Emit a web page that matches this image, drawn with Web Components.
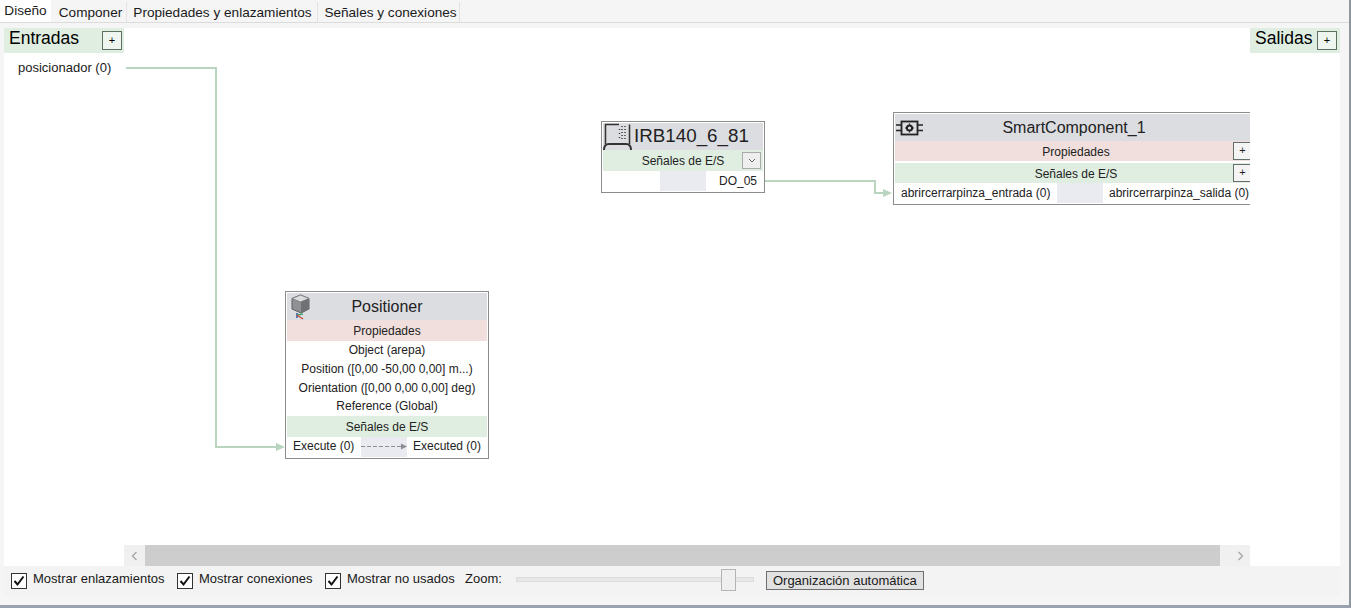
<!DOCTYPE html>
<html lang="es">
<head>
<meta charset="utf-8">
<title>Diseño</title>
<style>
  html, body { margin: 0; height: 608px; overflow: hidden; background: #fff; }
  body { font: 13px "Liberation Sans", Arial, sans-serif; color: #1a1a1a; }
</style>
</head>
<body>

<design-window>
  <tab-strip slot="tabs">
    <tab-item active>Diseño</tab-item>
    <tab-item style="width:72px">Componer</tab-item>
    <tab-item style="width:190px">Propiedades y enlazamientos</tab-item>
    <tab-item style="width:141px;padding-left:3px">Señales y conexiones</tab-item>
  </tab-strip>

  <io-column slot="inputs" label="Entradas" wide>
    <div style="padding:7px 0 0 14px">posicionador (0)</div>
  </io-column>

  <graph-view slot="graph">
    <flow-node heading="Positioner" icon="positioner" style="left:161px;top:263px;width:204px">
      <node-band tone="red">Propiedades</node-band>
      <node-prop>Object (arepa)</node-prop>
      <node-prop>Position ([0,00 -50,00 0,00] m...)</node-prop>
      <node-prop>Orientation ([0,00 0,00 0,00] deg)</node-prop>
      <node-prop>Reference (Global)</node-prop>
      <node-band tone="green">Señales de E/S</node-band>
      <signal-row left="Execute (0)" right="Executed (0)" left-width="74" link style="line-height:18px"></signal-row>
    </flow-node>

    <flow-node heading="IRB140_6_81" icon="controller" heading-align="left" style="left:477px;top:93px;width:164px">
      <node-band tone="green" toggle="down">Señales de E/S</node-band>
      <signal-row right="DO_05" left-width="57" align-right></signal-row>
    </flow-node>

    <flow-node heading="SmartComponent_1" icon="smart" open-right style="left:769px;top:84px;width:360px">
      <node-band tone="red" toggle="plus" compact spaced>Propiedades</node-band>
      <node-band tone="green" toggle="plus" compact>Señales de E/S</node-band>
      <signal-row left="abrircerrarpinza_entrada (0)" right="abrircerrarpinza_salida (0)" left-width="162"></signal-row>
    </flow-node>
  </graph-view>

  <io-column slot="outputs" label="Salidas"></io-column>

  <h-scroll slot="scroll"></h-scroll>

  <tool-bar slot="toolbar"></tool-bar>
</design-window>

<script>
class DesignWindow extends HTMLElement {
  constructor() {
    super();
    this.attachShadow({ mode: 'open' });
    this.shadowRoot.innerHTML = `
      <style>
        :host { display: flex; flex-direction: column; width: 1351px; height: 608px; box-sizing: border-box;
          background: #f5f5f5; border-bottom: 3px solid #9aa3ad; border-right: 2px solid #8e969e; }
        .body { margin: 5px 0 0 4px; width: 1336px; height: 538px; background: #fff;
          display: grid; grid-template-columns: 120px 1126px 90px; grid-template-rows: 517px 21px; }
        .scroll { grid-column: 2; }
        .foot { margin-left: 4px; width: 1336px; height: 30px; background: #f3f3f3; }
      </style>
      <slot name="tabs"></slot>
      <div class="body">
        <slot name="inputs"></slot>
        <slot name="graph"></slot>
        <slot name="outputs"></slot>
        <div class="scroll"><slot name="scroll"></slot></div>
      </div>
      <div class="foot"><slot name="toolbar"></slot></div>
    `;
  }
}

class TabStrip extends HTMLElement {
  constructor() {
    super();
    this.attachShadow({ mode: 'open' });
    this.shadowRoot.innerHTML = `
      <style>
        :host { display: flex; align-items: flex-end; height: 23px; box-sizing: border-box;
          border-bottom: 1px solid #dcdcdc; gap: 1px; font-size: 13.600px; }
      </style>
      <slot></slot>
    `;
  }
}

class TabItem extends HTMLElement {
  constructor() {
    super();
    this.attachShadow({ mode: 'open' });
    this.shadowRoot.innerHTML = `
      <style>
        :host { display: block; box-sizing: border-box; height: 20px; line-height: 22px; text-align: center;
          background: #f5f5f5; border: 1px solid #e2e2e2; border-width: 0 1px 0 0; white-space: nowrap; }
        :host([active]) { width: 51px; margin-right: 3px; height: 22px; line-height: 21px; background: #fff; border: 0; }
      </style>
      <slot></slot>
    `;
  }
}

class IoColumn extends HTMLElement {
  constructor() {
    super();
    this.attachShadow({ mode: 'open' });
    const label = this.getAttribute('label');
    this.shadowRoot.innerHTML = `
      <style>
        :host { display: block; font-size: 17.500px; }
        .head { display: flex; align-items: center; justify-content: space-between; box-sizing: border-box;
          height: 25px; padding: 0 3px 0 5px; background: #dfeee0; color: #000; }
        :host([wide]) .head { padding: 0 2px 0 5px; }
        .name { margin-bottom: 4px; }
        .add { width: 20px; height: 19px; box-sizing: border-box; border: 1px solid #5f6f62; background: #eef6ef;
          font-size: 11px; line-height: 16px; text-align: center; }
        .list { font-size: 13px; color: #1a1a1a; }
      </style>
      <div class="head"><span class="name">${label}</span><span class="add">+</span></div>
      <div class="list"><slot></slot></div>
    `;
  }
}

class GraphView extends HTMLElement {
  constructor() {
    super();
    this.attachShadow({ mode: 'open' });
    this.shadowRoot.innerHTML = `
      <style>
        :host { display: block; position: relative; overflow: hidden; height: 517px; }
        svg { position: absolute; left: 0; top: 0; }
      </style>
      <svg width="1126" height="517" fill="none" stroke="#b9d4bf" stroke-width="2">
        <path d="M2 40H92V419H152"/>
        <path d="M152 415l9 4-9 4z" fill="#b9d4bf" stroke="none"/>
        <path d="M641 153H751V165H759"/>
        <path d="M759 161l9 4-9 4z" fill="#b9d4bf" stroke="none"/>
      </svg>
      <slot></slot>
    `;
  }
}

const NODE_ICONS = {
  positioner: `<svg width="24" height="26" viewBox="-5 0 24 26" fill="none">
      <path d="M0 4.500L8.500 1 17 4.500V15l-8 4-9-4z" fill="#8f9194" stroke="#5c5e61"/>
      <path d="M0 4.500L8.500 1 17 4.500 8.500 8z" fill="#dadcde" stroke="#77797c" stroke-width=".8"/>
      <path d="M9 8v11l8-4V4.500z" fill="#6f7174"/>
      <path d="M5 19v5" stroke="#2a55a8" stroke-width="1.500"/>
      <path d="M5 21l6-1" stroke="#3fa56a" stroke-width="1.500"/>
      <path d="M5 21l6 4" stroke="#c8503c" stroke-width="1.500"/>
    </svg>`,
  controller: `<svg width="30" height="28" viewBox="0 0 30 28" fill="none" stroke="#333">
      <path d="M2.500 21V1.500H16M26.500 1.500V21" stroke-width="1.500"/>
      <path d="M19 3v1M19 6v1M19 9v1M19 12v1M19 15v1M22 3v1M22 6v1M22 9v1M22 12v1M22 15v1M16.500 6v1M16.500 10v1M16.500 14v1" stroke-width="1.400"/>
      <path d="M1 27c0-4 2-6 5-6h17c3 0 5 2 5 6" stroke-width="2"/>
    </svg>`,
  smart: `<svg width="29" height="16" viewBox="0 0 29 16" fill="none" stroke="#222">
      <rect x="6.500" y="1.500" width="16" height="13" stroke-width="1.800"/>
      <path d="M1 5h5M1 10.500h5M23 5h5M23 10.500h5" stroke-width="1.500"/>
      <circle cx="14.500" cy="8" r="2.600" stroke-width="2"/>
      <path d="M14.500 3.500v1.500M14.500 11v1.500M10 8h1.500M17.500 8H19" stroke-width="1.200"/>
    </svg>`
};

class FlowNode extends HTMLElement {
  constructor() {
    super();
    this.attachShadow({ mode: 'open' });
    const icon = NODE_ICONS[this.getAttribute('icon')] || '';
    this.shadowRoot.innerHTML = `
      <style>
        :host { display: block; position: absolute; box-sizing: border-box; padding: 1px;
          background: #fff; border: 1px solid #8c8c8c; }
        :host([open-right]) { border-right: 0; padding-right: 0; }
        .title { position: relative; height: 27px; line-height: 27px; background: #dcdde1; text-align: center;
          font-size: 16px; color: #222; }
        :host([heading-align="left"]) .title { text-align: left; padding-left: 31px; font-size: 18.800px; line-height: 26px; }
        .icon { position: absolute; left: 0; top: 0; height: 27px; display: flex; align-items: center; }
      </style>
      <div class="title"><span class="icon">${icon}</span>${this.getAttribute('heading')}</div>
      <slot></slot>
    `;
  }
}

class NodeBand extends HTMLElement {
  constructor() {
    super();
    this.attachShadow({ mode: 'open' });
    const toggle = this.getAttribute('toggle');
    let btn = '';
    if (toggle === 'plus') btn = '<span class="btn plus">+</span>';
    if (toggle === 'down') btn = `<span class="btn down"><svg width="8" height="5" viewBox="0 0 8 5" fill="none" stroke="#666"><path d="M1 1l3 3 3-3"/></svg></span>`;
    this.shadowRoot.innerHTML = `
      <style>
        :host { display: block; position: relative; height: 21px; line-height: 23px; text-align: center;
          font-size: 12px; color: #222; }
        :host([compact]) { height: 20px; box-sizing: border-box; padding-left: 4px; }
        :host([tone="red"]) { background: #f0dfdd; }
        :host([tone="green"]) { background: #dfeee0; }
        :host([spaced]) { margin-bottom: 2px; }
        .btn { position: absolute; right: 1px; top: 1px; box-sizing: border-box; width: 19px; height: 18px;
          border: 1px solid #66706a; background: #f4f4f4; font-size: 11px; line-height: 14px; }
        .down { right: 2px; top: 2px; height: 17px; border-color: #aaa; display: flex; align-items: center; justify-content: center; background: #eee; }
      </style>
      <slot></slot>${btn}
    `;
  }
}

class NodeProp extends HTMLElement {
  constructor() {
    super();
    this.attachShadow({ mode: 'open' });
    this.shadowRoot.innerHTML = `
      <style>
        :host { display: block; height: 18.750px; line-height: 19px; text-align: center; font-size: 12px; color: #222; white-space: nowrap; }
      </style>
      <slot></slot>
    `;
  }
}

class SignalRow extends HTMLElement {
  constructor() {
    super();
    this.attachShadow({ mode: 'open' });
    const left = this.getAttribute('left') || '';
    const right = this.getAttribute('right') || '';
    const leftWidth = this.getAttribute('left-width');
    const link = this.hasAttribute('link')
      ? `<svg width="46" height="20" viewBox="0 0 46 20" fill="none"><path d="M0 9.500H40" stroke="#8b8e96" stroke-dasharray="4 2"/><path d="M40 6.500l6 3-6 3z" fill="#8b8e96"/></svg>`
      : '';
    this.shadowRoot.innerHTML = `
      <style>
        :host { display: flex; height: 20px; line-height: 20px; font-size: 12px; color: #222; white-space: nowrap; }
        .l { box-sizing: border-box; width: ${leftWidth}px; padding-left: 6px; overflow: hidden; }
        .m { width: 46px; background: #e9ebf1; flex: none; }
        .r { flex: 1; padding-left: 6px; }
        :host([align-right]) .r { padding: 0 6px 0 0; text-align: right; }
      </style>
      <div class="l">${left}</div><div class="m">${link}</div><div class="r">${right}</div>
    `;
  }
}

class HScroll extends HTMLElement {
  constructor() {
    super();
    this.attachShadow({ mode: 'open' });
    this.shadowRoot.innerHTML = `
      <style>
        :host { display: flex; height: 21px; background: #f0f0f0; }
        .arrow { width: 21px; display: flex; align-items: center; justify-content: center; }
        .arrow.end { width: 30px; padding-right: 6px; box-sizing: border-box; justify-content: flex-end; }
        .thumb { width: 1075px; background: #cdcdcd; }
      </style>
      <div class="arrow"><svg width="7" height="10" viewBox="0 0 7 10" fill="none" stroke="#a5a5a5" stroke-width="1.300"><path d="M5.500 1L1.500 5l4 4"/></svg></div>
      <div class="thumb"></div>
      <div class="arrow end"><svg width="7" height="10" viewBox="0 0 7 10" fill="none" stroke="#a5a5a5" stroke-width="1.300"><path d="M1.500 1l4 4-4 4"/></svg></div>
    `;
  }
}

class ToolCheck extends HTMLElement {
  constructor() {
    super();
    this.attachShadow({ mode: 'open' });
    this.shadowRoot.innerHTML = `
      <style>
        :host { display: flex; align-items: center; gap: 6px; white-space: nowrap; }
        .box { width: 16px; height: 16px; box-sizing: border-box; border: 1px solid #333; background: #fff; margin-top: 1px; }
        svg { display: block; }
        .text { margin-top: -3px; }
      </style>
      <span class="box"><svg width="14" height="14" viewBox="0 0 14 14" fill="none" stroke="#111" stroke-width="2"><path d="M2.500 7l3 3.500 6-8"/></svg></span>
      <span class="text"><slot></slot></span>
    `;
  }
}

class ToolBar extends HTMLElement {
  constructor() {
    super();
    this.attachShadow({ mode: 'open' });
    this.shadowRoot.innerHTML = `
      <style>
        :host { display: flex; align-items: center; height: 28px; padding-left: 7px; box-sizing: border-box; }
        .zoom { margin: -3px 0 0 11px; }
        .slider { position: relative; width: 236px; height: 3px; margin: -1px 0 0 14px; background: #e7e7e7; border: 1px solid #dcdcdc; }
        .thumb { position: absolute; left: 204px; top: -9px; width: 13px; height: 20px; background: #efefef; border: 1px solid #b4b4b4; }
        button { all: unset; box-sizing: border-box; width: 158px; height: 19px; margin-left: 12px; text-align: center; line-height: 18px;
          background: #e1e1e1; border: 1px solid #6f6f6f; font: inherit; color: #1a1a1a; }
      </style>
      <tool-check style="width:166px">Mostrar enlazamientos</tool-check>
      <tool-check style="width:148px">Mostrar conexiones</tool-check>
      <tool-check style="width:129px">Mostrar no usados</tool-check>
      <span class="zoom">Zoom:</span>
      <div class="slider"><div class="thumb"></div></div>
      <button>Organización automática</button>
    `;
  }
}

customElements.define('design-window', DesignWindow);
customElements.define('tab-strip', TabStrip);
customElements.define('tab-item', TabItem);
customElements.define('io-column', IoColumn);
customElements.define('graph-view', GraphView);
customElements.define('flow-node', FlowNode);
customElements.define('node-band', NodeBand);
customElements.define('node-prop', NodeProp);
customElements.define('signal-row', SignalRow);
customElements.define('h-scroll', HScroll);
customElements.define('tool-check', ToolCheck);
customElements.define('tool-bar', ToolBar);
</script>
</body>
</html>
